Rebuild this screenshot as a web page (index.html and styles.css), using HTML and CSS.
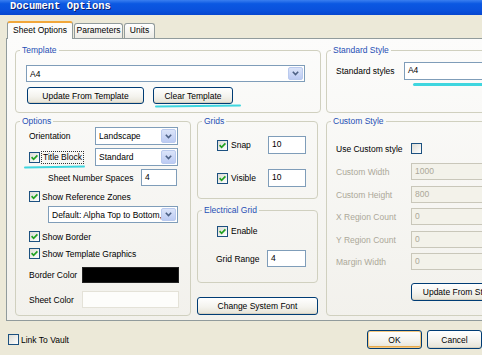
FILE: index.html
```html
<!DOCTYPE html>
<html>
<head>
<meta charset="utf-8">
<link rel="stylesheet" href="styles.css">
</head>
<body>
<div class="titlebar">Document Options</div>
<div class="content">
  <div class="tabs">
    <div class="tab active w66">Sheet Options</div>
    <div class="tab w49">Parameters</div>
    <div class="tab w31">Units</div>
  </div>
  <div class="panel">
    <div class="row1">
      <fieldset class="grp g-template">
        <legend>Template</legend>
        <div class="select tpl-select"><span class="val">A4</span><span class="arrow"><svg width="7" height="5" viewBox="0 0 7 5"><path d="M0.8 0.8 L3.5 3.5 L6.2 0.8" stroke="#4d6185" stroke-width="1.6" fill="none"/></svg></span></div>
        <div class="btnrow">
          <div class="btn w117">Update From Template</div>
          <div class="btn w80 ml9">Clear Template</div>
          <span class="mark mark-clear"></span>
        </div>
      </fieldset>
      <fieldset class="grp g-std">
        <legend>Standard Style</legend>
        <div class="stdrow">
          <span class="stdlabel">Standard styles</span>
          <div class="input std-input">A4</div>
          <span class="mark mark-std"></span>
        </div>
      </fieldset>
    </div>
    <div class="row2">
      <fieldset class="grp g-options">
        <legend>Options</legend>
        <div class="orow r-orient">
          <span class="olabel">Orientation</span>
          <div class="select w83"><span class="val">Landscape</span><span class="arrow"><svg width="7" height="5" viewBox="0 0 7 5"><path d="M0.8 0.8 L3.5 3.5 L6.2 0.8" stroke="#4d6185" stroke-width="1.6" fill="none"/></svg></span></div>
        </div>
        <div class="orow r-title">
          <span class="olabel cbl"><span class="cb"><svg width="9" height="9" viewBox="0 0 9 9"><path d="M1.6 4.2 L3.6 6.3 L7.4 2.3" stroke="#21a121" stroke-width="1.7" fill="none"/></svg></span><span class="focus">Title Block</span></span>
          <div class="select w83"><span class="val">Standard</span><span class="arrow"><svg width="7" height="5" viewBox="0 0 7 5"><path d="M0.8 0.8 L3.5 3.5 L6.2 0.8" stroke="#4d6185" stroke-width="1.6" fill="none"/></svg></span></div>
          <span class="mark mark-title"></span>
        </div>
        <div class="orow r-sheetnum">
          <span class="snlabel">Sheet Number Spaces</span>
          <div class="input w36">4</div>
        </div>
        <div class="orow r-refz cbl"><span class="cb"><svg width="9" height="9" viewBox="0 0 9 9"><path d="M1.6 4.2 L3.6 6.3 L7.4 2.3" stroke="#21a121" stroke-width="1.7" fill="none"/></svg></span><span>Show Reference Zones</span></div>
        <div class="orow r-default">
          <div class="select w130"><span class="val">Default: Alpha Top to Bottom,</span><span class="arrow"><svg width="7" height="5" viewBox="0 0 7 5"><path d="M0.8 0.8 L3.5 3.5 L6.2 0.8" stroke="#4d6185" stroke-width="1.6" fill="none"/></svg></span></div>
        </div>
        <div class="orow r-border cbl"><span class="cb"><svg width="9" height="9" viewBox="0 0 9 9"><path d="M1.6 4.2 L3.6 6.3 L7.4 2.3" stroke="#21a121" stroke-width="1.7" fill="none"/></svg></span><span>Show Border</span></div>
        <div class="orow r-tgraph cbl"><span class="cb"><svg width="9" height="9" viewBox="0 0 9 9"><path d="M1.6 4.2 L3.6 6.3 L7.4 2.3" stroke="#21a121" stroke-width="1.7" fill="none"/></svg></span><span>Show Template Graphics</span></div>
        <div class="orow r-bcolor">
          <span class="clabel">Border Color</span>
          <div class="swatch black"></div>
        </div>
        <div class="orow r-scolor">
          <span class="clabel">Sheet Color</span>
          <div class="swatch white"></div>
        </div>
      </fieldset>
      <div class="midcol">
        <fieldset class="grp g-grids">
          <legend>Grids</legend>
          <div class="grow r-snap">
            <span class="glabel cbl"><span class="cb"><svg width="9" height="9" viewBox="0 0 9 9"><path d="M1.6 4.2 L3.6 6.3 L7.4 2.3" stroke="#21a121" stroke-width="1.7" fill="none"/></svg></span><span>Snap</span></span>
            <div class="input w38">10</div>
          </div>
          <div class="grow r-visible">
            <span class="glabel cbl"><span class="cb"><svg width="9" height="9" viewBox="0 0 9 9"><path d="M1.6 4.2 L3.6 6.3 L7.4 2.3" stroke="#21a121" stroke-width="1.7" fill="none"/></svg></span><span>Visible</span></span>
            <div class="input w38">10</div>
          </div>
        </fieldset>
        <fieldset class="grp g-elec">
          <legend>Electrical Grid</legend>
          <div class="grow r-enable cbl"><span class="cb"><svg width="9" height="9" viewBox="0 0 9 9"><path d="M1.6 4.2 L3.6 6.3 L7.4 2.3" stroke="#21a121" stroke-width="1.7" fill="none"/></svg></span><span>Enable</span></div>
          <div class="grow r-range">
            <span class="rlabel">Grid Range</span>
            <div class="input w39">4</div>
          </div>
        </fieldset>
        <div class="btn sysfont">Change System Font</div>
      </div>
      <fieldset class="grp g-custom">
        <legend>Custom Style</legend>
        <div class="crow r-use">
          <span class="cl">Use Custom style</span>
          <span class="cb"></span>
        </div>
        <div class="crow r-cw"><span class="cl dis">Custom Width</span><div class="input dis wide">1000</div></div>
        <div class="crow r-ch"><span class="cl dis">Custom Height</span><div class="input dis wide">800</div></div>
        <div class="crow r-xr"><span class="cl dis">X Region Count</span><div class="input dis wide">0</div></div>
        <div class="crow r-yr"><span class="cl dis">Y Region Count</span><div class="input dis wide">0</div></div>
        <div class="crow r-mw"><span class="cl dis">Margin Width</span><div class="input dis wide">0</div></div>
        <div class="crow r-upd"><div class="btn updstd">Update From Standard</div></div>
      </fieldset>
    </div>
  </div>
  <div class="footer">
    <div class="vault cbl"><span class="cb plain"></span><span>Link To Vault</span></div>
    <div class="btn okbtn">OK</div>
    <div class="btn w55">Cancel</div>
  </div>
</div>
</body>
</html>
```
FILE: styles.css
```css
* { box-sizing: border-box; }
html, body { margin: 0; padding: 0; }
body {
  width: 482px;
  height: 355px;
  overflow: hidden;
  background: #ece9d8;
  font-family: "Liberation Sans", Arial, sans-serif;
  font-size: 8.5px;
  color: #000;
}
.titlebar {
  height: 15px;
  background: linear-gradient(#3a7ff0, #0b58e2 25%, #0a51dc 70%, #0746cf);
  color: #fff;
  font-family: "Liberation Mono", monospace;
  font-weight: bold;
  font-size: 10.5px;
  line-height: 13px;
  padding-left: 10px;
  text-shadow: 1px 1px 0 #0b1f6e;
  white-space: nowrap;
}
.content { padding-top: 6px; }

/* tabs */
.tabs { display: flex; align-items: flex-end; height: 17px; margin-left: 7px; }
.tab {
  height: 15px;
  border: 1px solid #919b9c;
  border-bottom: none;
  border-radius: 3px 3px 0 0;
  background: linear-gradient(#ffffff, #ecebe5);
  line-height: 13px;
  text-align: center;
  white-space: nowrap;
  margin-right: 1px;
}
.tab.active {
  height: 18px;
  margin-bottom: -1px;
  position: relative;
  z-index: 1;
  background: #fcfcfb;
  border-top: 2px solid #f1a73b;
  line-height: 15px;
  padding-top: 0;
}
.w66 { width: 66px; }
.w49 { width: 49px; }
.w31 { width: 31px; }

.panel {
  margin-left: 6px;
  width: 500px;
  height: 283px;
  border: 1px solid #919b9c;
  background: linear-gradient(#fcfcfb, #f2f1ec);
  padding: 6px 0 0 8px;
}
.row1 { display: flex; }
.row2 { display: flex; margin-top: 3px; }

/* group boxes */
fieldset.grp {
  margin: 0;
  padding: 0;
  border: 1px solid #d0d0bf;
  border-radius: 4px;
  min-width: 0;
}
legend {
  margin-left: 4px;
  padding: 0 2px;
  color: #1f4fb5;
  line-height: 11px;
  font-size: 8.5px;
}
.g-template { width: 306px; height: 68px; }
.g-std { width: 170px; height: 68px; margin-left: 5px !important; }
.g-options { width: 176px; height: 200px; }
.midcol { width: 121px; margin-left: 6px; display: flex; flex-direction: column; }
.g-grids { height: 83px; }
.g-elec { height: 78px; margin-top: 6px !important; }
.g-custom { width: 170px; height: 200px; margin-left: 8px !important; }

/* controls */
.select {
  display: flex;
  align-items: center;
  height: 18px;
  border: 1px solid #7f9db9;
  background: #fff;
  padding: 1px;
}
.select .val { flex: 1; padding-left: 2px; white-space: nowrap; overflow: hidden; }
.arrow {
  width: 15px;
  height: 100%;
  flex: none;
  border: 1px solid #bacaee;
  border-radius: 2px;
  background: linear-gradient(#dbe4f9, #bccbf3);
  display: flex;
  align-items: center;
  justify-content: center;
}
.arrow svg { display: block; }
.input {
  height: 17px;
  border: 1px solid #7f9db9;
  background: #fff;
  padding-left: 3px;
  line-height: 15px;
  white-space: nowrap;
}
.input.dis { background: #f3f2ea; border-color: #c9c7ba; color: #aca899; }
.btn {
  height: 18px;
  border: 1px solid #003c74;
  border-radius: 3px;
  background: linear-gradient(#ffffff, #f4f3ee 55%, #e6e3d6);
  box-shadow: inset 0 -1px 0 #d6d0c0;
  display: flex;
  align-items: center;
  justify-content: center;
  white-space: nowrap;
  flex: none;
}
.cb {
  width: 11px;
  height: 11px;
  flex: none;
  border: 1px solid #1c5180;
  background: linear-gradient(135deg, #dcdcd5, #ffffff);
  display: inline-flex;
  align-items: center;
  justify-content: center;
}
.cb svg { display: block; }
.cbl { display: flex; align-items: center; }
.cbl .cb { margin-right: 2px; }
.focus { outline: 1px dotted #333; outline-offset: 0; padding: 0 1px; line-height: 11px; }

.mark { position: absolute; background: #3fd6df; border-radius: 2px; }

/* template group */
.tpl-select { width: 279px; height: 17px; margin: 9px 0 0 10px; }
.btnrow { position: relative; display: flex; margin: 5px 0 0 11px; }
.w117 { width: 117px; height: 17px; }
.w80 { width: 80px; height: 17px; }
.ml9 { margin-left: 9px; }
.mark-clear { left: 128px; top: 18px; width: 86px; height: 2px; transform: rotate(-0.6deg); }

/* standard */
.stdrow { position: relative; display: flex; align-items: center; margin: 6px 0 0 9px; }
.stdlabel { width: 75px; }
.std-input { width: 100px; height: 18px; }
.mark-std { left: 77px; top: 21px; width: 100px; height: 3px; }

/* options */
.orow { display: flex; align-items: center; margin-left: 13px; position: relative; }
.olabel { width: 66px; flex: none; }
.w83 { width: 83px; }
.w130 { width: 130px; }
.r-orient { height: 18px; }
.r-title { height: 18px; margin-top: 3px; }
.mark-title { left: -5px; top: 18px; width: 61px; height: 2px; transform: rotate(-1deg); }
.r-sheetnum { height: 17px; margin-top: 3px; margin-left: 32px; }
.snlabel { width: 93px; }
.w36 { width: 36px; }
.r-refz { height: 13px; margin-top: 4px; }
.r-default { height: 17px; margin-top: 3px; margin-left: 32px; }
.r-default .select { height: 17px; }
.r-border { height: 13px; margin-top: 7px; }
.r-tgraph { height: 13px; margin-top: 4px; }
.r-bcolor { height: 16px; margin-top: 7px; }
.r-scolor { height: 17px; margin-top: 8px; }
.clabel { width: 53px; }
.swatch { width: 97px; height: 100%; }
.swatch.black { background: #000; border: 1px solid #222; }
.swatch.white { background: #fdfdfb; border: 1px solid #e4e2d8; }

/* grids */
.grow { display: flex; align-items: center; margin-left: 19px; }
.glabel { width: 51px; flex: none; }
.glabel .cb { margin-right: 3px; }
.w38 { width: 38px; height: 18px; }
.w39 { width: 39px; }
.r-snap { margin-top: 9px; }
.r-visible { margin-top: 15px; }
.r-enable { height: 14px; margin-top: 8px; }
.r-enable .cb { margin-right: 3px; }
.r-range { margin-top: 12px; margin-left: 18px; }
.rlabel { width: 51px; }
.sysfont { width: 121px; height: 18px; margin-top: 14px; }

/* custom */
.crow { display: flex; align-items: center; margin-left: 9px; }
.cl { width: 75px; flex: none; white-space: nowrap; }
.cl.dis { color: #aca899; }
.wide { width: 100px; }
.r-use { height: 13px; margin-top: 15px; }
.r-cw { margin-top: 8px; }
.r-ch { margin-top: 6px; }
.r-xr { margin-top: 5px; }
.r-yr { margin-top: 6px; }
.r-mw { margin-top: 5px; }
.r-upd { margin-top: 13px; margin-left: 84px; }
.updstd { width: 110px; height: 18px; }

/* footer */
.footer { display: flex; align-items: center; height: 19px; margin-top: 9px; }
.vault { width: 408px; padding-left: 8px; }
.vault .cb { margin-right: 2px; }
.okbtn {
  width: 55px;
  height: 19px;
  box-shadow: inset 0 0 0 1px #f5c880, inset 0 -2px 0 #e5a94c;
}
.w55 { width: 55px; height: 19px; margin-left: 5px; }
```
